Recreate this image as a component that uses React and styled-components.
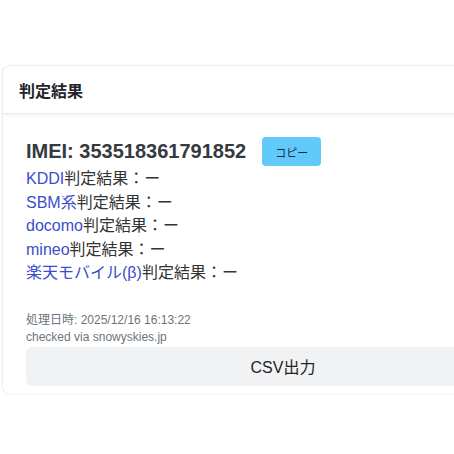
import React from 'react';
import styled, { createGlobalStyle } from 'styled-components';

const GlobalStyle = createGlobalStyle`
  html, body {
    margin: 0;
    padding: 0;
    background: #fff;
    overflow: hidden;
  }
  body {
    font-family: "Liberation Sans", Arial, "Noto Sans CJK JP", sans-serif;
    color: #333;
  }
`;

const Page = styled.div`
  padding: 65px 0 0 2px;
`;

const Card = styled.section`
  width: 562px;
  background: #fff;
  border: 1px solid #eceef0;
  border-bottom-color: #f6f6f6;
  border-radius: 8px;
  box-shadow: 0 1px 3px rgba(0, 0, 0, 0.03);
  box-sizing: border-box;
`;

const CardHeader = styled.div`
  height: 47px;
  display: flex;
  align-items: center;
  padding: 0 16px;
  border-bottom: 1px solid #ededed;
  box-shadow: 0 2px 3px rgba(0, 0, 0, 0.05);
`;

const CardTitle = styled.h2`
  margin: 0;
  font-size: 16px;
  font-weight: bold;
  color: #212529;
`;

const CardBody = styled.div`
  padding: 23px 23px 8px;
`;

const ImeiRow = styled.div`
  display: flex;
  align-items: center;
  gap: 16px;
  height: 29px;
`;

const Imei = styled.span`
  font-size: 20px;
  font-weight: bold;
  color: #343a40;
`;

const CopyButton = styled.button`
  height: 29px;
  padding: 0 13px;
  border: none;
  border-radius: 4px;
  background: #62c9fb;
  color: #1d2a33;
  font-family: inherit;
  font-size: 11px;
`;

const ResultList = styled.div`
  display: flex;
  flex-direction: column;
  margin-top: 1px;
  margin-bottom: 27px;
`;

const ResultLine = styled.div`
  font-size: 16px;
  line-height: 23.5px;
  color: #333;
`;

const Carrier = styled.span`
  color: #3a4ecb;
`;

const Meta = styled.div`
  font-size: 12px;
  line-height: 17px;
  color: #6c757d;
`;

const CsvButton = styled.button`
  display: block;
  width: 100%;
  height: 39px;
  margin-top: 1px;
  border: none;
  border-radius: 6px;
  background: #f1f2f4;
  color: #222;
  font-family: inherit;
  font-size: 16px;
`;

const carriers = ['KDDI', 'SBM系', 'docomo', 'mineo', '楽天モバイル(β)'];

export default function App() {
  return (
    <Page>
      <GlobalStyle />
      <Card>
        <CardHeader>
          <CardTitle>判定結果</CardTitle>
        </CardHeader>
        <CardBody>
          <ImeiRow>
            <Imei>IMEI: 353518361791852</Imei>
            <CopyButton>コピー</CopyButton>
          </ImeiRow>
          <ResultList>
            {carriers.map(name => (
              <ResultLine key={name}>
                <Carrier>{name}</Carrier>判定結果：ー
              </ResultLine>
            ))}
          </ResultList>
          <Meta>処理日時: 2025/12/16 16:13:22</Meta>
          <Meta>checked via snowyskies.jp</Meta>
          <CsvButton>CSV出力</CsvButton>
        </CardBody>
      </Card>
    </Page>
  );
}
